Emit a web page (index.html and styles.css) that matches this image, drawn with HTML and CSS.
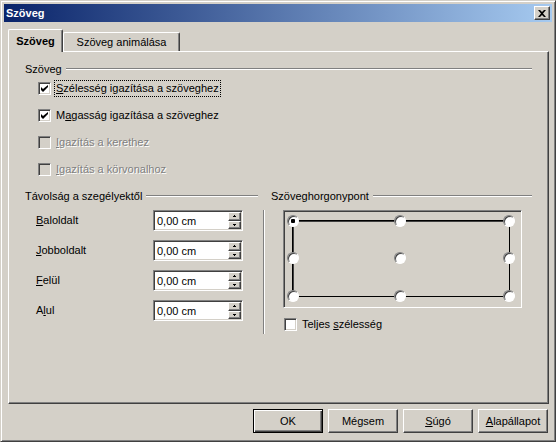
FILE: index.html
```html
<!DOCTYPE html>
<html lang="hu">
<head>
<meta charset="utf-8">
<title>Szöveg</title>
<link rel="stylesheet" href="styles.css">
</head>
<body>
<div class="window">
  <div class="titlebar">
    <span class="title">Szöveg</span>
    <span class="close"><svg width="8" height="7" viewBox="0 0 8 7"><path d="M0 0h2l2 2 2-2h2L5 3.5 8 7H6L4 5 2 7H0l3-3.5z" fill="#000"/></svg></span>
  </div>
  <div class="tabs">
    <div class="tab active">Szöveg</div>
    <div class="tab">Szöveg animálása</div>
  </div>
  <div class="panel">
    <div class="header"><span class="htext">Szöveg</span><span class="rule"></span></div>
    <div class="checks">
      <div class="check"><span class="box"><svg width="7" height="7" viewBox="0 0 7 7"><path d="M0 2l2 2 5-4v2L2 7 0 5z" fill="#000"/></svg></span><span class="ctext focus"><u>S</u>zélesség igazítása a szöveghez</span></div>
      <div class="check"><span class="box"><svg width="7" height="7" viewBox="0 0 7 7"><path d="M0 2l2 2 5-4v2L2 7 0 5z" fill="#000"/></svg></span><span class="ctext">M<u>a</u>gasság igazítása a szöveghez</span></div>
      <div class="check disabled"><span class="box"></span><span class="ctext"><u>I</u>gazítás a kerethez</span></div>
      <div class="check disabled"><span class="box"></span><span class="ctext"><u>I</u>gazítás a körvonalhoz</span></div>
    </div>
    <div class="columns">
      <div class="col-left">
        <div class="header"><span class="htext">Távolság a szegélyektől</span><span class="rule"></span></div>
        <div class="spins">
          <div class="spin-row"><span class="slabel"><u>B</u>aloldalt</span><div class="spin"><span class="val">0,00 cm</span><span class="arrows"><span class="arr"><svg width="3" height="2" viewBox="0 0 3 2"><path d="M1 0h1v1h1v1H0V1h1z" fill="#000"/></svg></span><span class="arr"><svg width="3" height="2" viewBox="0 0 3 2"><path d="M0 0h3v1H2v1H1V1H0z" fill="#000"/></svg></span></span></div></div>
          <div class="spin-row"><span class="slabel"><u>J</u>obboldalt</span><div class="spin"><span class="val">0,00 cm</span><span class="arrows"><span class="arr"><svg width="3" height="2" viewBox="0 0 3 2"><path d="M1 0h1v1h1v1H0V1h1z" fill="#000"/></svg></span><span class="arr"><svg width="3" height="2" viewBox="0 0 3 2"><path d="M0 0h3v1H2v1H1V1H0z" fill="#000"/></svg></span></span></div></div>
          <div class="spin-row"><span class="slabel"><u>F</u>elül</span><div class="spin"><span class="val">0,00 cm</span><span class="arrows"><span class="arr"><svg width="3" height="2" viewBox="0 0 3 2"><path d="M1 0h1v1h1v1H0V1h1z" fill="#000"/></svg></span><span class="arr"><svg width="3" height="2" viewBox="0 0 3 2"><path d="M0 0h3v1H2v1H1V1H0z" fill="#000"/></svg></span></span></div></div>
          <div class="spin-row"><span class="slabel">A<u>l</u>ul</span><div class="spin"><span class="val">0,00 cm</span><span class="arrows"><span class="arr"><svg width="3" height="2" viewBox="0 0 3 2"><path d="M1 0h1v1h1v1H0V1h1z" fill="#000"/></svg></span><span class="arr"><svg width="3" height="2" viewBox="0 0 3 2"><path d="M0 0h3v1H2v1H1V1H0z" fill="#000"/></svg></span></span></div></div>
        </div>
      </div>
      <div class="vsep"></div>
      <div class="col-right">
        <div class="header"><span class="htext">Szöveghorgonypont</span><span class="rule"></span></div>
        <div class="anchor">
          <div class="frame"></div>
          <span class="radio r-l r-t selected"></span>
          <span class="radio r-c r-t"></span>
          <span class="radio r-r r-t"></span>
          <span class="radio r-l r-m"></span>
          <span class="radio r-c r-m"></span>
          <span class="radio r-r r-m"></span>
          <span class="radio r-l r-b"></span>
          <span class="radio r-c r-b"></span>
          <span class="radio r-r r-b"></span>
        </div>
        <div class="check full"><span class="box"></span><span class="ctext plain">Teljes <u>s</u>zélesség</span></div>
      </div>
    </div>
  </div>
  <div class="buttons">
    <div class="btn default">OK</div>
    <div class="btn">Mégsem</div>
    <div class="btn"><u>S</u>úgó</div>
    <div class="btn"><u>A</u>lapállapot</div>
  </div>
</div>
</body>
</html>
```

FILE: styles.css
```css
* { box-sizing: border-box; }
html, body { margin: 0; padding: 0; }
body {
  width: 556px;
  height: 442px;
  overflow: hidden;
  background: #d4d0c8;
  font-family: "Liberation Sans", Arial, sans-serif;
  font-size: 11px;
  color: #000;
}
u { text-decoration: underline; text-underline-offset: 1px; }

.window {
  width: 556px;
  height: 442px;
  border: 1px solid;
  border-color: #d4d0c8 #404040 #404040 #d4d0c8;
  box-shadow: inset 1px 1px #fff, inset -1px -1px #808080;
  padding: 3px;
  display: flex;
  flex-direction: column;
}

.titlebar {
  height: 18px;
  flex: none;
  background: linear-gradient(to right, #0a246a, #a6caf0);
  display: flex;
  align-items: center;
  justify-content: space-between;
  padding: 0 2px 0 2px;
}
.title { color: #fff; font-weight: bold; line-height: 13px; }
.close {
  width: 16px;
  height: 14px;
  background: #d4d0c8;
  border: 1px solid;
  border-color: #fff #404040 #404040 #fff;
  box-shadow: inset -1px -1px #808080;
  display: flex;
  align-items: center;
  justify-content: center;
}
.close svg { display: block; }

.tabs {
  display: flex;
  align-items: flex-end;
  height: 22px;
  margin: 7px 0 0 4px;
  flex: none;
}
.tab {
  height: 19px;
  width: 117px;
  border-top: 1px solid #fff;
  border-left: 1px solid #fff;
  border-right: 1px solid #404040;
  box-shadow: inset -1px 0 #808080;
  border-top-left-radius: 2px;
  border-top-right-radius: 2px;
  text-align: center;
  line-height: 13px;
  padding-top: 3px;
  background: #d4d0c8;
}
.tab.active {
  width: 55px;
  height: 23px;
  margin-bottom: -1px;
  padding-top: 5px;
  font-weight: bold;
  position: relative;
  z-index: 1;
}

.panel {
  width: 541px;
  height: 353px;
  margin-left: 4px;
  flex: none;
  border: 1px solid;
  border-color: #fff #404040 #404040 #fff;
  box-shadow: inset -1px -1px #808080;
  padding: 10px 16px 0 16px;
}

.header {
  display: flex;
  align-items: center;
  height: 14px;
}
.htext { line-height: 13px; white-space: nowrap; }
.rule {
  flex: 1;
  height: 2px;
  margin-left: 4px;
  border-top: 1px solid #808080;
  border-bottom: 1px solid #fff;
}

.checks {
  margin-top: 4px;
  display: flex;
  flex-direction: column;
  gap: 10px;
  padding-left: 13px;
}
.check {
  display: flex;
  align-items: center;
  height: 17px;
}
.box {
  width: 13px;
  height: 13px;
  flex: none;
  background: #fff;
  border: 1px solid;
  border-color: #808080 #fff #fff #808080;
  box-shadow: inset 1px 1px #404040, inset -1px -1px #d4d0c8;
  display: flex;
  align-items: center;
  justify-content: center;
}
.box svg { display: block; }
.ctext {
  margin-left: 3px;
  border: 1px dotted transparent;
  padding: 0 1px;
  line-height: 15px;
  white-space: nowrap;
}
.ctext.focus { border-color: #000; }
.check.disabled .box { background: #d4d0c8; }
.check.disabled .ctext { color: #808080; text-shadow: 1px 1px 0 #fff; }

.columns {
  display: flex;
  margin-top: 11px;
}
.col-left { width: 233px; flex: none; }
.spins {
  margin-top: 7px;
  display: flex;
  flex-direction: column;
  gap: 9px;
}
.spin-row {
  display: flex;
  align-items: center;
  height: 21px;
  padding-left: 11px;
}
.slabel { width: 117px; flex: none; line-height: 13px; }
.spin {
  width: 90px;
  height: 21px;
  flex: none;
  background: #fff;
  border: 1px solid;
  border-color: #808080 #fff #fff #808080;
  box-shadow: inset 1px 1px #404040, inset -1px -1px #d4d0c8;
  padding: 1px;
  display: flex;
  align-items: stretch;
}
.val {
  flex: 1;
  padding-left: 2px;
  line-height: 17px;
  padding-top: 1px;
}
.arrows {
  width: 13px;
  display: flex;
  flex-direction: column;
}
.arr {
  flex: 1;
  background: #d4d0c8;
  border: 1px solid;
  border-color: #fff #404040 #404040 #fff;
  box-shadow: inset -1px -1px #808080;
  display: flex;
  align-items: center;
  justify-content: center;
}
.arr svg { display: block; }

.vsep {
  width: 2px;
  height: 124px;
  margin: 21px 0 0 5px;
  border-left: 1px solid #808080;
  border-right: 1px solid #fff;
  flex: none;
}
.col-right { flex: 1; margin-left: 6px; }

.anchor {
  position: relative;
  margin: 7px 0 0 12px;
  width: 239px;
  height: 98px;
  border: 1px solid;
  border-color: #808080 #fff #fff #808080;
  box-shadow: inset 1px 1px #404040, inset -1px -1px #d4d0c8;
}
.frame {
  position: absolute;
  left: 8px;
  top: 9px;
  width: 218px;
  height: 77px;
  border: 1px solid #000;
  box-shadow: inset 1px 1px #404040;
}
.radio {
  position: absolute;
  width: 12px;
  height: 12px;
  border-radius: 50%;
  background: #fff;
  border: 1px solid;
  border-color: #808080 #fff #fff #808080;
  box-shadow: inset 1px 1px #404040;
}
.radio.selected::after {
  content: "";
  position: absolute;
  left: 3px;
  top: 3px;
  width: 4px;
  height: 4px;
  border-radius: 1px;
  background: #000;
}
.r-l { left: 3px; }
.r-c { left: 110px; }
.r-r { left: 219px; }
.r-t { top: 4px; }
.r-m { top: 41px; }
.r-b { top: 79px; }

.check.full {
  margin-top: 9px;
  padding-left: 13px;
  height: 15px;
}
.ctext.plain { border: none; margin-left: 5px; padding: 0; }

.buttons {
  display: flex;
  justify-content: flex-end;
  gap: 5px;
  margin-top: 5px;
  padding-right: 4px;
  flex: none;
}
.btn {
  width: 70px;
  height: 24px;
  border: 1px solid;
  border-color: #fff #404040 #404040 #fff;
  box-shadow: inset -1px -1px #808080;
  display: flex;
  align-items: center;
  justify-content: center;
  line-height: 13px;
}
.btn.default {
  border-color: #000;
  box-shadow: inset 1px 1px #fff, inset -1px -1px #404040, inset -2px -2px #808080;
}
```
